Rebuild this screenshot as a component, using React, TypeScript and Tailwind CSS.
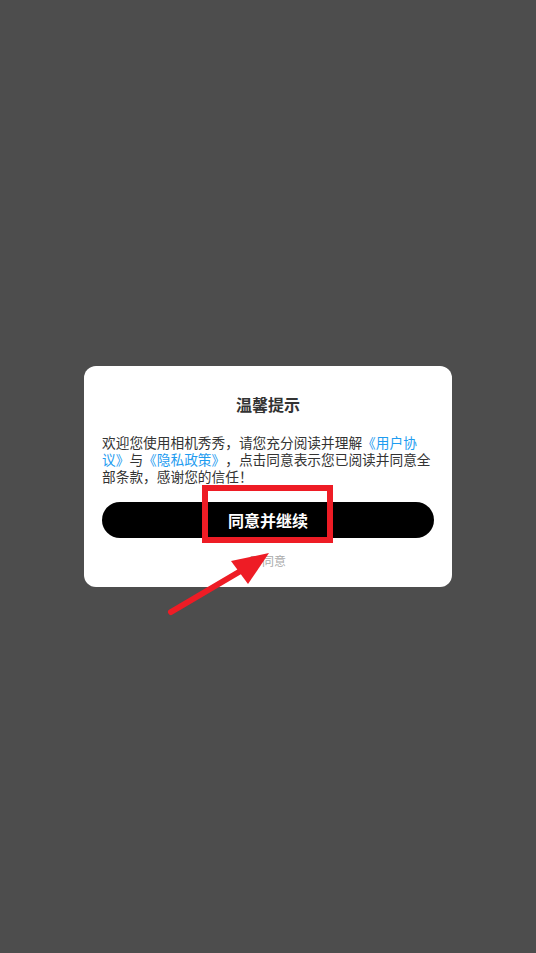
import React from "react";

export default function App() {
  return (
    <div
      className="relative w-[536px] h-[953px] bg-[#4d4d4d] flex items-center justify-center overflow-hidden [text-spacing-trim:space-all]"
      style={{ fontFamily: '"Noto Sans CJK SC", "Noto Sans", sans-serif' }}
    >
      <div className="w-[368px] bg-white rounded-[12px] pt-[26px] pb-[18px] px-[18px] flex flex-col">
        <div className="text-center text-[16px] leading-[24px] font-bold text-[#333333]">温馨提示</div>
        <div className="mt-[18px] text-[13.7px] leading-[17px] text-[#333333] whitespace-nowrap">
          <div>
            欢迎您使用相机秀秀，请您充分阅读并理解<span className="text-[#1e9cf0]">《用户协</span>
          </div>
          <div>
            <span className="text-[#1e9cf0]">议》</span>与<span className="text-[#1e9cf0]">《隐私政策》</span>，点击同意表示您已阅读并同意全
          </div>
          <div>部条款，感谢您的信任！</div>
        </div>
        <button className="mt-[17px] h-[36px] w-full rounded-full bg-black text-white text-[16px] font-bold flex items-center justify-center">
          同意并继续
        </button>
        <div className="mt-[15px] text-center text-[12px] leading-[16px] text-[#aaaaaa]">不同意</div>
      </div>

      <div className="absolute left-[202px] top-[485px] w-[131px] h-[58px] border-[6px] border-[#ee1c25]" />

      <svg className="absolute left-0 top-0" width="536" height="953" viewBox="0 0 536 953">
        <line x1="171" y1="612" x2="244" y2="569" stroke="#ee1c25" strokeWidth="6" strokeLinecap="round" />
        <polygon points="269,553 231,561 248,584" fill="#ee1c25" />
      </svg>
    </div>
  );
}
